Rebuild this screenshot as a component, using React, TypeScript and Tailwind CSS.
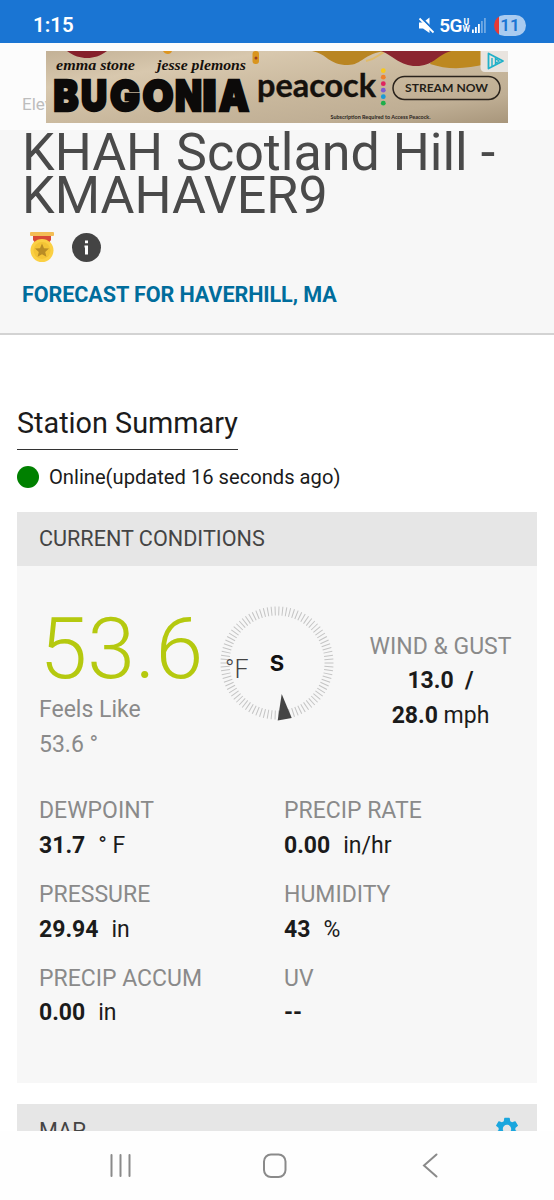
import React from 'react';
import { MdSettings } from 'react-icons/md';

const READINGS = [
  { label: 'DEWPOINT', value: '31.7', unit: '° F' },
  { label: 'PRECIP RATE', value: '0.00', unit: 'in/hr' },
  { label: 'PRESSURE', value: '29.94', unit: 'in' },
  { label: 'HUMIDITY', value: '43', unit: '%' },
  { label: 'PRECIP ACCUM', value: '0.00', unit: 'in' },
  { label: 'UV', value: '--', unit: '' },
];

const PEACOCK_DOTS = ['#f8c81c', '#f0802c', '#e0245e', '#7f5bd0', '#1b9bd8', '#1fae4b'];

// wide-set title letters, each stretched to its own block
const TITLE_LETTERS = [
  { char: 'B', x: 7.5, width: 25 },
  { char: 'U', x: 35, width: 26 },
  { char: 'G', x: 64, width: 30 },
  { char: 'O', x: 96.5, width: 31 },
  { char: 'N', x: 129, width: 27 },
  { char: 'I', x: 156.5, width: 14 },
  { char: 'A', x: 173, width: 30 },
];

function StatusBar() {
  return (
    <div className="h-[43px] shrink-0 bg-[#1a75d3] flex items-center justify-between pl-[33px] pr-[28px] pt-[8px] text-white">
      <span className="text-[20.5px] leading-none font-semibold">1:15</span>
      <div className="flex items-center">
        <svg className="w-[17px] h-[17px] mr-[4px]" viewBox="0 0 17 17">
          <path d="M1 5.500H5L11.500 0.500V16L5 11.500H1Z" fill="#fff" />
          <path d="M2.500 0L17 14.500" stroke="#1a75d3" strokeWidth="2" />
          <path d="M1.500 1.500L15.500 15.500" stroke="#fff" strokeWidth="1.800" />
        </svg>
        <span className="text-[19px] leading-none font-semibold tracking-[-0.5px]">5G</span>
        <span className="flex flex-col text-[8.5px] leading-[7px] font-bold items-center ml-[0.5px] mr-[2px]">
          <span>U</span>
          <span>W</span>
        </span>
        <svg className="w-[15px] h-[16px] mr-[7px]" viewBox="0 0 15 16">
          <rect x="0" y="11.500" width="1.800" height="3.500" fill="#fff" />
          <rect x="3" y="9" width="1.800" height="6" fill="#fff" />
          <rect x="6" y="6" width="1.800" height="9" fill="#fff" />
          <rect x="9" y="3" width="1.800" height="12" fill="#6fa8e3" />
          <rect x="12" y="0" width="1.800" height="15" fill="#6fa8e3" />
        </svg>
        <span className="w-[32px] h-[21px] rounded-full bg-[linear-gradient(90deg,#e53935_5px,#a9cbf0_5px)] text-[#1a75d3] text-[17px] leading-[21px] font-semibold text-center">
          11
        </span>
      </div>
    </div>
  );
}

function AdBanner() {
  return (
    <svg className="w-[462px] h-[72px]" viewBox="0 0 462 72">
      <defs>
        <linearGradient id="paper" x1="0" y1="0" x2="1" y2="1">
          <stop offset="0" stopColor="#c3b196" />
          <stop offset="0.25" stopColor="#d8c8ae" />
          <stop offset="0.55" stopColor="#c9b89d" />
          <stop offset="0.8" stopColor="#bfae94" />
          <stop offset="1" stopColor="#a8967b" />
        </linearGradient>
      </defs>
      <rect width="462" height="72" fill="url(#paper)" />
      <path d="M21 0C28 5 34 7 41 7S54 5 61 0Z" fill="#86202b" />
      <path d="M117 0H126C125 4 119 4 117 0Z" fill="#dd951f" />
      <rect x="206.500" y="0" width="6.500" height="13" rx="3" fill="#d9951f" />
      <circle cx="210" cy="7" r="1.500" fill="#9b3d20" />
      <path d="M266 0C282 3 282 14 302 14C316 14 318 2 340 0Z" fill="#b98522" />
      <path d="M320 10C330 8 332 4 338 1" stroke="#e0bb69" strokeWidth="2" fill="none" />
      <path d="M384 13C402 19 420 18 440 13V0H390Z" fill="#bd8820" />
      <path d="M335 0C348 5 354 15 370 15C388 15 389 5 405 0Z" fill="#8b2530" />
      <g fontFamily="'Liberation Serif', serif" fontWeight="700" fontStyle="italic" fontSize="15" fill="#15100c">
        <text x="10" y="18.500" textLength="79" lengthAdjust="spacingAndGlyphs">emma stone</text>
        <text x="111" y="18.500" textLength="89" lengthAdjust="spacingAndGlyphs">jesse plemons</text>
      </g>
      <g fontFamily="Inter, sans-serif" fontWeight="900" fontSize="43" fill="#0c0a09" stroke="#0c0a09" strokeWidth="2.500">
        {TITLE_LETTERS.map(({ char, x, width }) => (
          <text key={char} x={x} y="60.200" textLength={width} lengthAdjust="spacingAndGlyphs">
            {char}
          </text>
        ))}
      </g>
      <text
        x="211"
        y="46"
        textLength="119"
        lengthAdjust="spacingAndGlyphs"
        fontFamily="Lato, sans-serif"
        fontWeight="700"
        fontSize="33"
        fill="#15110d"
        stroke="#15110d"
        strokeWidth="0.400"
      >
        peacock
      </text>
      {PEACOCK_DOTS.map((color, i) => (
        <circle key={color} cx="337.300" cy={19.7 + i * 6.5} r="2.400" fill={color} />
      ))}
      <rect x="347" y="25.500" width="107" height="23" rx="11.500" fill="none" stroke="#2a231c" strokeWidth="1.500" />
      <text
        x="359"
        y="41"
        textLength="83"
        lengthAdjust="spacingAndGlyphs"
        fontFamily="Lato, sans-serif"
        fontWeight="700"
        fontSize="12"
        fill="#241e18"
      >
        STREAM NOW
      </text>
      <text
        x="284.500"
        y="67.500"
        textLength="100"
        lengthAdjust="spacingAndGlyphs"
        fontFamily="Lato, sans-serif"
        fontWeight="700"
        fontSize="5"
        fill="#2a231c"
      >
        Subscription Required to Access Peacock.
      </text>
      {/* AdChoices */}
      <path d="M434.500 0H462V21H439Q434.500 21 434.500 16Z" fill="#e9e4df" />
      <path d="M442.500 2.500L457 10L442.500 17.500Z" fill="none" stroke="#1fb0c8" strokeWidth="1.800" strokeLinejoin="round" />
      <path d="M446 7V15M449.500 7.500V12.500L453 10Z" fill="none" stroke="#1fb0c8" strokeWidth="1.400" />
    </svg>
  );
}

function Medal() {
  return (
    <svg className="w-[24px] h-[32px]" viewBox="0 0 24 32">
      <path d="M3 4H21V9L18 13H6L3 9Z" fill="#d84a35" />
      <rect x="0" y="1" width="24" height="4" rx="1" fill="#f3bd55" />
      <circle cx="12" cy="19.500" r="11.500" fill="#fbd044" />
      <circle cx="12" cy="19.500" r="8.500" fill="#f4c436" />
      <path d="M12 12.500L14 17.200L19 17.600L15.200 20.900L16.400 25.800L12 23.200L7.600 25.800L8.800 20.900L5 17.600L10 17.200Z" fill="#b98c25" />
    </svg>
  );
}

function Compass() {
  const ticks = Array.from({ length: 90 }, (_, i) => i * 4 + 2);

  return (
    <svg className="w-[116px] h-[116px]" viewBox="-58 -58 116 116">
      {ticks.map(deg => (
        <line key={deg} y1="-56.500" y2="-47.500" stroke="#c4c4c4" strokeWidth="1" transform={`rotate(${deg})`} />
      ))}
      <path d="M4.700 31L0.700 57.500L14.700 55Z" fill="#444" />
      <text y="8" textAnchor="middle" fontFamily="Inter, sans-serif" fontWeight="700" fontSize="22" fill="#111">
        S
      </text>
    </svg>
  );
}

function CurrentConditions() {
  return (
    <section className="h-[571px] bg-[#f7f7f7]">
      <h2 className="h-[54px] bg-[#e6e6e6] pl-[22px] text-[21.6px] leading-[54px] text-[#444]">CURRENT CONDITIONS</h2>

      <div className="flex h-[228.4px] text-[23px] leading-[34.6px]">
        <div className="w-[202px] pl-[22px] pt-[38px] text-[#8a8a8a]">
          <div className="pl-[0.5px] text-[86px] leading-[89px] font-light text-[#b5c90f]">53.6</div>
          <div>Feels Like</div>
          <div>53.6 °</div>
        </div>
        <div className="relative w-[116px] pt-[39px]">
          <Compass />
          <span className="absolute left-[6px] top-[87px] text-[25px] leading-[34px] font-light text-[#444]">°F</span>
        </div>
        <div className="flex-1 pl-[9px] pt-[63.6px] text-center text-[#1b1b1b]">
          <div className="text-[#8a8a8a]">WIND &amp; GUST</div>
          <div className="whitespace-pre font-bold">13.0  /</div>
          <div><b>28.0</b> mph</div>
        </div>
      </div>

      <div className="grid grid-cols-[245px_1fr] pl-[22px] text-[23px] leading-[34.6px]">
        {READINGS.map(item => (
          <div key={item.label} className="h-[83.6px]">
            <div className="text-[#8a8a8a]">{item.label}</div>
            <div className="text-[#1b1b1b]">
              <b className="mr-[13px]">{item.value}</b>
              <span>{item.unit}</span>
            </div>
          </div>
        ))}
      </div>
    </section>
  );
}

function NavBar() {
  return (
    <div className="h-[69px] shrink-0 bg-[#fefefe] flex items-center pl-[109px]">
      <svg className="w-[23px] h-[25px]" viewBox="0 0 23 25" stroke="#8a8a8a" strokeWidth="2" strokeLinecap="round">
        <path d="M2.500 2V23M11.500 2V23M20.500 2V23" />
      </svg>
      <svg className="w-[25px] h-[25px] ml-[130px]" viewBox="0 0 25 25" fill="none" stroke="#8a8a8a" strokeWidth="2">
        <rect x="2" y="1.500" width="21.500" height="22.500" rx="7" />
      </svg>
      <svg className="w-[17px] h-[25px] ml-[134px]" viewBox="0 0 17 25" fill="none" stroke="#8a8a8a" strokeWidth="2" strokeLinecap="round">
        <path d="M15.500 1.500L3 12.500L15.500 23.500" />
      </svg>
    </div>
  );
}

export default function App() {
  return (
    <div className="w-[554px] h-[1200px] flex flex-col overflow-hidden bg-white font-['Roboto',sans-serif]">
      <StatusBar />

      <div className="relative h-[87px] shrink-0 bg-[#fcfcfc] pl-[46px] pt-[8px]">
        <span className="absolute left-[22px] top-[50px] w-[24px] overflow-hidden text-[17px] leading-[22px] text-[#bdbdbd]">Elev</span>
        <AdBanner />
      </div>

      <header className="h-[205px] shrink-0 bg-[#f7f7f7] border-b-[2px] border-[#d3d3d3] pl-[22px] pt-[1px]">
        <h1 className="text-[52px] leading-[43px] text-[#4a4a4a]">
          KHAH Scotland Hill -<br />
          KMAHAVER9
        </h1>
        <div className="flex items-center gap-[18px] pl-[8px] mt-[14px]">
          <Medal />
          <span className="w-[29px] h-[29px]">
            <svg viewBox="0 0 29 29">
              <circle cx="14.500" cy="14.500" r="14.500" fill="#444" />
              <path d="M13 7.500H16V10.300H13ZM12.500 12.500H16V21.500H13V14.500H12.500Z" fill="#fff" />
            </svg>
          </span>
        </div>
        <a className="block mt-[18px] text-[21.6px] leading-[28px] font-bold tracking-[-0.1px] text-[#006d9c]">FORECAST FOR HAVERHILL, MA</a>
      </header>

      <main className="h-[796px] shrink-0 overflow-hidden px-[17px] pt-[68px]">
        <h2 className="inline-block h-[47px] border-b border-[#333] text-[28.8px] leading-[40px] text-[#1b1b1b]">Station Summary</h2>
        <div className="flex items-center gap-[10px] h-[54px] text-[20.16px] text-[#1b1b1b]">
          <span className="w-[22px] h-[22px] rounded-full bg-[#008000]" />
          <span>Online(updated 16 seconds ago)</span>
        </div>
        <div className="pt-[8px]">
          <CurrentConditions />
        </div>
        <div className="mt-[21px] h-[54px] bg-[#e6e6e6] flex justify-between pl-[22px] pr-[16px] text-[21.6px] leading-[53px] text-[#444]">
          <span>MAP</span>
          <MdSettings className="w-[28px] h-[28px] mt-[11px] text-[#1aa6de]" />
        </div>
      </main>

      <NavBar />
    </div>
  );
}
